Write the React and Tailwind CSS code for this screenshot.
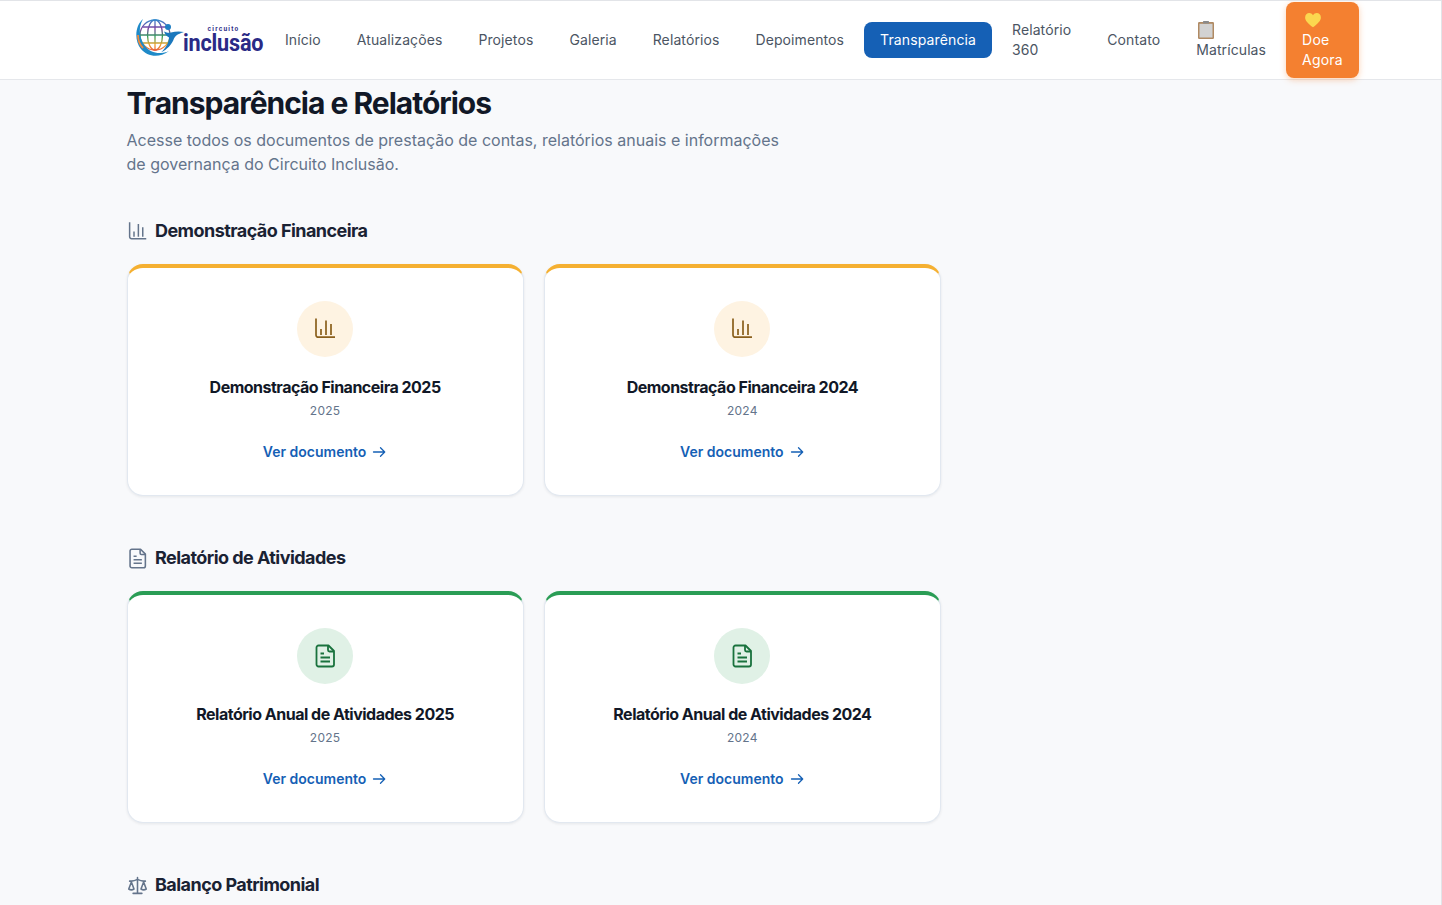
const navItems = ["Início", "Atualizações", "Projetos", "Galeria", "Relatórios", "Depoimentos"]

const ChartIcon = ({ className }) => (
  <svg viewBox="0 0 24 24" fill="none" stroke="currentColor" strokeWidth="1.7" className={className}>
    <path d="M3 1.500V18a2.200 2.200 0 0 0 2.200 2.200H22" />
    <path d="M8 12v6M13 3.500V18M18 7v11" />
  </svg>
)

const DocIcon = ({ className }) => (
  <svg viewBox="0 0 24 24" fill="none" stroke="currentColor" strokeWidth="1.8" strokeLinejoin="round" className={className}>
    <path d="M5.500 1.500h10L21 7v13.500a2 2 0 0 1-2 2H5.500a2 2 0 0 1-2-2v-17a2 2 0 0 1 2-2Z" />
    <path d="M15 1.500V6a1.500 1.500 0 0 0 1.500 1.500H21" />
    <path d="M7.500 9.500h3.500M7.500 13.500h9.500M7.500 17.500h9.500" />
  </svg>
)

const ScaleIcon = ({ className }) => (
  <svg viewBox="0 0 24 24" fill="none" stroke="currentColor" strokeWidth="1.8" strokeLinecap="round" strokeLinejoin="round" className={className}>
    <path d="M12 3v18M7 21h10M3 7h2c2 0 5-1 7-2 2 1 5 2 7 2h2" />
    <path d="m16 16 3-8 3 8c-.9.600-1.900 1-3 1s-2.100-.4-3-1Z" />
    <path d="m2 16 3-8 3 8c-.9.600-1.900 1-3 1s-2.100-.4-3-1Z" />
  </svg>
)

const ArrowIcon = () => (
  <svg viewBox="0 0 16 16" fill="none" stroke="currentColor" strokeWidth="1.300" strokeLinecap="round" strokeLinejoin="round" className="w-4 h-4">
    <path d="M2.500 8h11M9.500 3.800 13.700 8l-4.200 4.200" />
  </svg>
)

const Logo = () => (
  <div className="flex w-[128px] h-[40px] shrink-0 relative ml-px mb-[3px]">
    <svg viewBox="0 0 48 40" className="w-[48px] h-[40px] shrink-0" fill="none">
      <defs>
        <linearGradient id="rainbow" gradientUnits="userSpaceOnUse" x1="0" y1="1" x2="0" y2="33">
          <stop offset="0" stopColor="#2f8fd0" />
          <stop offset="0.3" stopColor="#7b3fa0" />
          <stop offset="0.55" stopColor="#2f9e5b" />
          <stop offset="0.8" stopColor="#f0a32f" />
          <stop offset="1" stopColor="#e5533d" />
        </linearGradient>
      </defs>
      <g stroke="url(#rainbow)" strokeWidth="1.300">
        <circle cx="19" cy="17" r="15" />
        <ellipse cx="19" cy="17" rx="7.500" ry="15" />
        <path d="M19 2v30M6.500 9h25M4 17h30M6.500 25h25" />
      </g>
      <path d="M7 1C-1 8-2 22 5 31c6 7 17 10 28 2-9 4-19 2-24-5C3 20 2 10 7 1Z" fill="#1f8ac8" />
      <path d="M2 17c0 5 2 10 5 13" stroke="#ef8a3a" strokeWidth="1.800" />
      <circle cx="32" cy="9" r="3" fill="#1f7fc4" />
      <path d="M48 14c-5-1-9-.5-13 .5-2 .5-4 .5-7-1 1 3 3 5 5 6 0 5-3 10-8 15 6-3 11-8 13-14 2-4 6-5 10-6.500Z" fill="#1b78bd" />
    </svg>
    <div className="absolute left-[47px] top-[8px] w-[81px] text-[#2a2a86] leading-none">
      <div className="text-center font-bold text-[6px] leading-[6px] tracking-[0.2em] font-['Inter',sans-serif]">circuito</div>
      <div className="font-['Roboto',sans-serif] font-bold text-[24px] leading-[20px] mt-[1px] tracking-[-0.2px] origin-left [transform:scaleX(0.9)] whitespace-nowrap">inclusão</div>
    </div>
  </div>
)

const HeartEmoji = () => (
  <div className="h-5 flex items-center pl-[2px]">
    <svg viewBox="0 0 24 24" className="w-[18px] h-[18px] block">
      <path d="M12 21.500C5 16.500 1.500 12.500 1.500 8.500 1.500 5.200 4 2.800 7 2.800c2 0 3.800 1 5 3 1.200-2 3-3 5-3 3 0 5.500 2.400 5.500 5.700 0 4-3.500 8-10.500 13Z" fill="#fbd84f" />
    </svg>
  </div>
)

const ClipboardEmoji = () => (
  <svg viewBox="0 0 20 20" className="w-[20px] h-[20px] block">
    <rect x="2" y="2" width="16" height="17" rx="1.200" fill="#b08a63" />
    <rect x="3.500" y="3.800" width="13" height="13.700" fill="#d2d2d2" />
    <rect x="7" y="1" width="6" height="2.500" rx="0.500" fill="#8a8a8a" />
  </svg>
)

const navText = "px-4 py-2 text-[14px] leading-[20px] tracking-[0.1px] text-[#4b5563]"

const DocCard = ({ title, year, icon, topColor, circle, iconColor }) => (
  <div className={`bg-white rounded-2xl border border-[#e2e8f0] border-t-4 ${topColor} shadow-[0_1px_3px_rgba(15,23,42,0.08)] h-[232px] flex flex-col items-center pt-[33px]`}>
    <div className={`w-14 h-14 rounded-full flex items-center justify-center ${circle} ${iconColor}`}>{icon}</div>
    <h3 className="mt-[19px] font-bold text-[16px] leading-[22px] tracking-[-0.5px] text-[#111827]">{title}</h3>
    <p className="mt-[4px] text-[12px] leading-[18px] tracking-[0.3px] text-[#64748b]">{year}</p>
    <a className="mt-[22px] flex items-center gap-[5px] text-[14px] leading-[20px] font-semibold text-[#1560b5]">
      Ver documento
      <ArrowIcon />
    </a>
  </div>
)

const SectionTitle = ({ icon, children }) => (
  <div className="flex items-center gap-[7.500px] h-[30px]">
    <span className="w-[21px] flex justify-center text-[#64748b]">{icon}</span>
    <h2 className="font-bold text-[18px] leading-[30px] tracking-[-0.55px] text-[#1a2233]">{children}</h2>
  </div>
)

export default function App() {
  return (
    <div className="h-screen overflow-hidden bg-[#f8f9fb] font-['Inter',sans-serif] border-t border-r border-[#e2e4e8]">
      <header className="h-[79px] bg-white border-b border-[#e5e7eb] pl-[135px] pb-px flex items-center">
        <Logo />
        <nav className="flex items-center gap-1 ml-[5px]">
          {navItems.map((label) => (
            <a key={label} className={`${navText} whitespace-nowrap`}>{label}</a>
          ))}
          <a className="px-4 py-2 rounded-lg bg-[#1560b5] text-white text-[14px] leading-[20px] tracking-[0.12px]">Transparência</a>
          <a className={navText}>Relatório<br />360</a>
          <a className={navText}>Contato</a>
          <a className={navText}>
            <ClipboardEmoji />
            Matrículas
          </a>
          <a className="px-4 py-2 rounded-lg bg-[#f48030] text-white text-[14px] leading-[20px] tracking-[0.2px] shadow-[0_2px_6px_rgba(245,130,49,0.35)]">
            <HeartEmoji />
            Doe<br />Agora
          </a>
        </nav>
      </header>
      <main className="pl-[126.500px]">
        <h1 className="mt-[4px] font-bold text-[30px] leading-[38px] tracking-[-1px] text-[#111827]">Transparência e Relatórios</h1>
        <p className="mt-[6px] w-[672px] text-[16px] leading-[24px] text-[#64748b]">
          Acesse todos os documentos de prestação de contas, relatórios anuais e informações de governança do Circuito Inclusão.
        </p>
        <section className="mt-[40px]">
          <SectionTitle icon={<ChartIcon className="w-[21px] h-[21px]" />}>Demonstração Financeira</SectionTitle>
          <div className="grid grid-cols-2 gap-5 mt-[18px] w-[814.500px]">
            {[2025, 2024].map((y) => (
              <DocCard key={y} title={`Demonstração Financeira ${y}`} year={y} icon={<ChartIcon className="w-6 h-6" />} topColor="border-t-[#f5b031]" circle="bg-[#fef3e2]" iconColor="text-[#8a5f1c]" />
            ))}
          </div>
        </section>
        <section className="mt-[47px]">
          <SectionTitle icon={<DocIcon className="w-[21px] h-[21px]" />}>Relatório de Atividades</SectionTitle>
          <div className="grid grid-cols-2 gap-5 mt-[18px] w-[814.500px]">
            {[2025, 2024].map((y) => (
              <DocCard key={y} title={`Relatório Anual de Atividades ${y}`} year={y} icon={<DocIcon className="w-6 h-6" />} topColor="border-t-[#2a9d55]" circle="bg-[#e0f1e6]" iconColor="text-[#19723d]" />
            ))}
          </div>
        </section>
        <section className="mt-[47px]">
          <SectionTitle icon={<ScaleIcon className="w-[21px] h-[21px]" />}>Balanço Patrimonial</SectionTitle>
        </section>
      </main>
    </div>
  )
}
